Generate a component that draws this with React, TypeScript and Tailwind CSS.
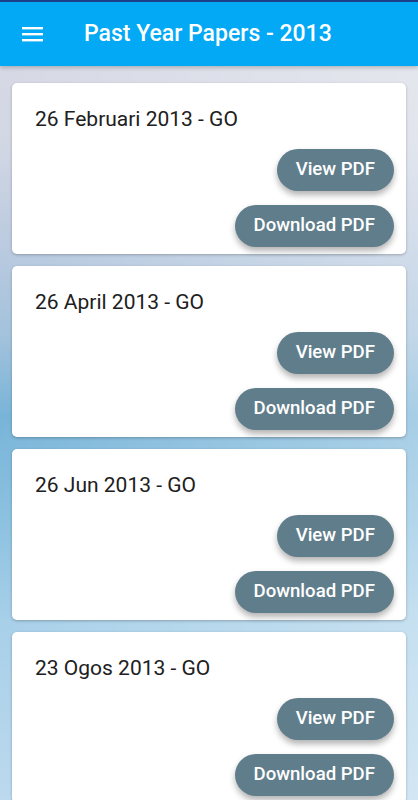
import React from "react";

const papers = [
  "26 Februari 2013 - GO",
  "26 April 2013 - GO",
  "26 Jun 2013 - GO",
  "23 Ogos 2013 - GO",
];

function Card({ title }: { title: string }) {
  return (
    <div className="bg-white rounded-[5px] shadow-[0_1px_3px_rgba(0,0,0,0.25)] pt-[23px] pb-[7px] pl-[23px] pr-[12px] flex flex-col">
      <div className="text-[21px] leading-[26px] text-[#202020] h-[26px]">{title}</div>
      <div className="flex flex-col items-end gap-[14px] mt-[17px]">
        <button className="h-[42px] px-[19px] rounded-full bg-[#607d8b] text-white text-[18.6px] font-medium shadow-[0_4px_6px_rgba(0,0,0,0.3)]">
          View PDF
        </button>
        <button className="h-[42px] px-[19px] rounded-full bg-[#607d8b] text-white text-[18.6px] font-medium shadow-[0_4px_6px_rgba(0,0,0,0.3)]">
          Download PDF
        </button>
      </div>
    </div>
  );
}

export default function App() {
  return (
    <div className="w-[418px] h-[800px] overflow-hidden flex flex-col font-['Roboto',sans-serif] bg-[linear-gradient(to_right,rgba(255,255,255,0)_0%,rgba(255,255,255,0.35)_100%),linear-gradient(to_bottom,#dadbe5_0%,#d2d7e4_18%,#bccbe0_30%,#a3c2dc_42%,#78b4d8_52%,#8cc1e0_65%,#a8d0e9_78%,#bcd9ee_100%)]">
      <div className="h-[66px] shrink-0 bg-[#03a9f4] border-t-2 border-[#1c3f8a] flex items-center shadow-[0_2px_4px_rgba(0,0,0,0.2)] z-10">
        <div className="w-[84px] pl-[22px] flex items-center">
          <svg width="22" height="16" viewBox="0 0 22 16">
            <rect x="0" y="1" width="21" height="2.4" fill="white" />
            <rect x="0" y="7" width="21" height="2.4" fill="white" />
            <rect x="0" y="13" width="21" height="2.4" fill="white" />
          </svg>
        </div>
        <div className="text-white text-[23px] font-medium">Past Year Papers - 2013</div>
      </div>
      <div className="flex flex-col gap-[12px] px-[12px] pt-[17px]">
        {papers.map((p) => (
          <Card key={p} title={p} />
        ))}
      </div>
    </div>
  );
}
